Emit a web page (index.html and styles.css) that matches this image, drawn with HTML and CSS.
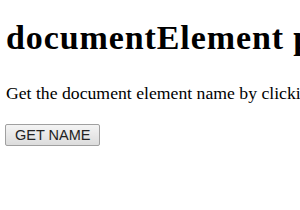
FILE: index.html
```html
<!DOCTYPE html>
<html lang="en">

<head>
    <meta charset="UTF-8">
    <meta name="viewport" content="width=device-width, initial-scale=1.0">
    <title>documentElement property</title>
    <link rel="stylesheet" href="styles.css">
</head>

<body>
    <h1 class="title">documentElement property</h1>
    <p class="desc">Get the document element name by clicking the button below.</p>
    <button class="btn" onclick="getName();">GET NAME</button>
    <p class="result" id="result"></p>
    <script>
        function getName() {
            document.getElementById('result').textContent = document.documentElement.nodeName
        }
    </script>
</body>
</html>
```

FILE: styles.css
```css
html {
    overflow: hidden;
}

body {
    width: 900px;
    margin: 0;
    padding: 18px 6px 0;
    font-family: "Liberation Serif", "Times New Roman", serif;
    color: #000;
    background: #fff;
}

.title {
    margin: 0 0 25px;
    font-size: 34px;
    line-height: 40px;
    font-weight: bold;
    letter-spacing: 0.9px;
    white-space: nowrap;
}

.desc {
    margin: 0 0 20px;
    font-size: 17.7px;
    line-height: 21px;
    white-space: nowrap;
}

.btn {
    height: 22px;
    margin-left: -1px;
    padding: 0 9px;
    border: 1px solid #a0a0a0;
    border-radius: 2px;
    background: linear-gradient(#f4f4f4, #dcdcdc);
    font-family: "Liberation Sans", Arial, sans-serif;
    font-size: 14.5px;
    line-height: 20px;
    color: #222;
}
```
